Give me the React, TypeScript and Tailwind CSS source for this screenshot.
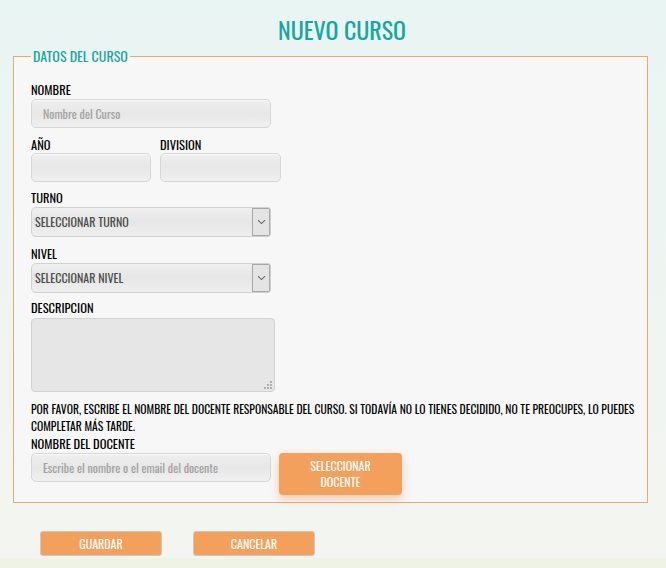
import React from "react";

const F = "font-['Oswald','Liberation_Sans_Narrow','DejaVu_Sans_Condensed',sans-serif]";

function Label({ children }: { children: React.ReactNode }) {
  return <div className="h-[16px] text-[12.5px] leading-[16px] text-black">{children}</div>;
}

function TextInput({ w, placeholder }: { w: string; placeholder?: string }) {
  return (
    <input
      placeholder={placeholder}
      className={`${w} h-[29px] rounded-[5px] border border-[#d6d6d6] bg-gradient-to-b from-[#efefef] via-[#e7e7e7] to-[#f0f0f0] px-[11px] text-[12px] text-[#555] outline-none placeholder:text-[#a2a2a2] shadow-[inset_0_1px_1px_rgba(255,255,255,0.8)]`}
    />
  );
}

function Select({ text }: { text: string }) {
  return (
    <div className="flex h-[30px] w-[240px] items-stretch overflow-hidden rounded-l-[5px] rounded-r-[3px] border border-[#d0d0d0] bg-gradient-to-b from-[#efefef] via-[#e6e6e6] to-[#efefef]">
      <div className="flex flex-1 items-center pl-[3px] text-[12px] text-[#4a4a4a]">{text}</div>
      <div className="flex w-[18px] items-center justify-center border border-[#a8a8a8] bg-[#e4e4e4]">
        <svg width="9" height="6" viewBox="0 0 9 6">
          <path d="M1 1.2 L4.5 4.6 L8 1.2" fill="none" stroke="#666" strokeWidth="1.1" />
        </svg>
      </div>
    </div>
  );
}

export default function App() {
  return (
    <div className={`${F} relative flex min-h-[568px] w-full flex-col bg-gradient-to-b from-[#e9f5f3] to-[#f4f5f0]`}>
      <h1 className="pl-[18px] pt-[14px] text-center text-[24px] leading-[30px] text-[#17a7a1]">NUEVO CURSO</h1>
      <fieldset className="mx-[13px] mr-[18px] mt-[4px] border border-[#e8a878] bg-[#f7f7f7] pb-[7px] pl-[17px] pr-[10px]">
        <legend className="ml-[0px] px-[2px] text-[14px] leading-[16px] text-[#17a7a1]">DATOS DEL CURSO</legend>
        <div className="pt-[18px]">
          <Label>NOMBRE</Label>
          <div className="mt-[1px]">
            <TextInput w="w-[240px]" placeholder="Nombre del Curso" />
          </div>
          <div className="mt-[9px] flex gap-[9px]">
            <div>
              <Label>AÑO</Label>
              <TextInput w="w-[120px] h-[28px]" />
            </div>
            <div>
              <Label>DIVISION</Label>
              <TextInput w="w-[121px] h-[28px]" />
            </div>
          </div>
          <div className="mt-[8px]">
            <Label>TURNO</Label>
            <div className="mt-[1px]">
              <Select text="SELECCIONAR TURNO" />
            </div>
          </div>
          <div className="mt-[9px]">
            <Label>NIVEL</Label>
            <div className="mt-[1px]">
              <Select text="SELECCIONAR NIVEL" />
            </div>
          </div>
          <div className="mt-[7px]">
            <Label>DESCRIPCION</Label>
            <div className="relative mt-[2px] h-[74px] w-[244px]">
              <textarea className="h-full w-full resize-none rounded-[4px] border border-[#d2d2d2] bg-[#e6e6e6] outline-none" />
              <svg className="absolute bottom-[3px] right-[3px]" width="8" height="8" viewBox="0 0 8 8">
                <rect x="6" y="0" width="2" height="2" fill="#b0b0b0" />
                <rect x="3" y="3" width="2" height="2" fill="#b0b0b0" />
                <rect x="6" y="3" width="2" height="2" fill="#b0b0b0" />
                <rect x="0" y="6" width="2" height="2" fill="#b0b0b0" />
                <rect x="3" y="6" width="2" height="2" fill="#b0b0b0" />
                <rect x="6" y="6" width="2" height="2" fill="#b0b0b0" />
              </svg>
            </div>
          </div>
          <p className="mt-[8px] whitespace-nowrap text-[11.6px] leading-[17px] text-black">
            POR FAVOR, ESCRIBE EL NOMBRE DEL DOCENTE RESPONSABLE DEL CURSO. SI TODAVÍA NO LO TIENES DECIDIDO, NO TE PREOCUPES, LO PUEDES
            <br />
            COMPLETAR MÁS TARDE.
          </p>
          <div className="mt-[2px]">
            <Label>NOMBRE DEL DOCENTE</Label>
          </div>
          <div className="mt-[1px] flex items-start gap-[8px]">
            <TextInput w="w-[240px]" placeholder="Escribe el nombre o el email del docente" />
            <button className="flex h-[42px] w-[123px] flex-col items-center justify-center rounded-[4px] bg-[#f2a05b] text-[12px] leading-[16px] text-white shadow-[0_4px_8px_rgba(235,150,80,0.45)]">
              <span>SELECCIONAR</span>
              <span>DOCENTE</span>
            </button>
          </div>
        </div>
      </fieldset>
      <div className="mt-[28px] flex gap-[31px] pl-[40px]">
        <button className="h-[25px] w-[122px] rounded-[3px] border border-[#cbc6bf] bg-[#f2a05b] text-[12px] text-white">GUARDAR</button>
        <button className="h-[25px] w-[122px] rounded-[3px] border border-[#cbc6bf] bg-[#f2a05b] text-[12px] text-white">CANCELAR</button>
      </div>
      <div className="mt-auto h-[10px] bg-[#eff3e6]" />
    </div>
  );
}
